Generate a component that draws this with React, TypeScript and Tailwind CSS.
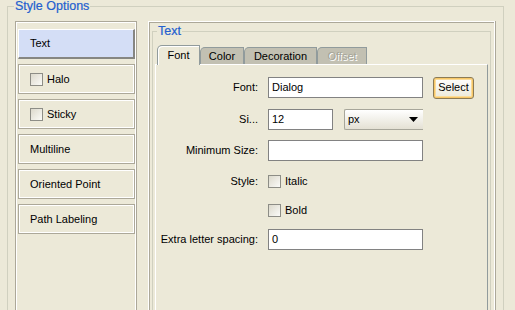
import React from "react";

const items = [
  { label: "Text", selected: true },
  { label: "Halo", check: true },
  { label: "Sticky", check: true },
  { label: "Multiline" },
  { label: "Oriented Point" },
  { label: "Path Labeling" },
];

const tabs = [
  { label: "Font", w: "w-[43px]", selected: true },
  { label: "Color", w: "w-[44px]" },
  { label: "Decoration", w: "w-[73px]" },
  { label: "Offset", w: "w-[50px]", disabled: true },
];

function CheckBox() {
  return (
    <span className="inline-block w-[13px] h-[13px] shrink-0 border border-[#8d8d86] bg-gradient-to-br from-[#dcd9cc] to-[#fbfbf8]" />
  );
}

function Field({ w, value }: { w: string; value?: string }) {
  return (
    <div className={`${w} h-[21px] border border-[#828282] bg-white pl-[3px] flex items-center`}>
      {value}
    </div>
  );
}

function Row({ label, mt, children }: { label: string; mt: string; children: React.ReactNode }) {
  return (
    <div className={`flex items-center h-[23px] ${mt}`}>
      <div className="w-[102px] text-right whitespace-nowrap overflow-hidden">{label}</div>
      <div className="ml-[10px] flex items-center">{children}</div>
    </div>
  );
}

export default function App() {
  return (
    <div className="w-[515px] h-[310px] overflow-hidden bg-[#ece9d8] font-['Liberation_Sans',Arial,sans-serif] text-[11px] text-black">
      <fieldset className="ml-[7px] w-[497px] h-[330px] border border-[#d0d0bf]">
        <legend className="ml-[6px] px-[1px] text-[12.5px] leading-[13px] text-[#2360cf] [-webkit-text-stroke:0.2px_#2360cf]">Style Options</legend>
        <div className="flex mt-[8px] ml-[7px]">
          {/* list of style options */}
          <div className="w-[122px] h-[300px] border border-[#aca899] shadow-[inset_1px_1px_0_#fff,inset_-1px_-1px_0_#fff] pt-[7px] pl-[2px] flex flex-col gap-[5px]">
            {items.map((it) =>
              it.selected ? (
                <div
                  key={it.label}
                  className="w-[117px] h-[30px] bg-[#d4def6] border-t border-l border-white border-r-2 border-b-2 border-r-[#868682] border-b-[#868682] pl-[11px] flex items-center"
                >
                  {it.label}
                </div>
              ) : (
                <div
                  key={it.label}
                  className="w-[117px] h-[30px] border border-[#aca899] shadow-[inset_1px_1px_0_#fff,inset_-1px_-1px_0_#fff] pl-[11px] flex items-center gap-[4px]"
                >
                  {it.check && <CheckBox />}
                  {it.label}
                </div>
              )
            )}
          </div>

          {/* editor panel */}
          <div className="ml-[11px] w-[347px] h-[300px] border border-white shadow-[inset_1px_1px_0_#aca899,1px_0_0_#aca899]">
            <fieldset className="ml-[3px] mt-[3px] w-[339px] h-[300px] border border-[#d0d0bf]">
              <legend className="ml-[4px] px-[1px] text-[12.5px] leading-[13px] text-[#2360cf] [-webkit-text-stroke:0.2px_#2360cf]">Text</legend>
              <div className="mt-[7px] ml-[2px] w-[333px]">
                <div className="flex items-end h-[19px] pl-[2px]">
                  {tabs.map((t) =>
                    t.selected ? (
                      <div
                        key={t.label}
                        className={`${t.w} h-[20px] -mb-[1px] relative z-10 bg-[#ece9d8] border-t border-l border-r border-[#919b9c] rounded-tl-[5px] shadow-[inset_1px_1px_0_#fff] flex items-center justify-center`}
                      >
                        {t.label}
                      </div>
                    ) : (
                      <div
                        key={t.label}
                        className={`${t.w} h-[17px] bg-[#c2c0b2] border-t border-l border-r border-[#919b9c] rounded-tl-[5px] flex items-center justify-center ${
                          t.disabled ? "text-[#a6a598] [text-shadow:1px_1px_0_#fff]" : ""
                        }`}
                      >
                        {t.label}
                      </div>
                    )
                  )}
                </div>
                <div className="h-[260px] border-t border-l border-white border-r border-r-[#919b9c]">
                  <Row label="Font:" mt="mt-[11px]">
                    <Field w="w-[155px]" value="Dialog" />
                    <div className="ml-[10px] w-[41px] h-[22px] rounded-[3px] border border-[#8c7b55] shadow-[inset_0_0_0_1px_#f7c767,inset_0_0_0_2px_#fbdc9a] bg-gradient-to-b from-[#ffffff] to-[#ece9d8] flex items-center justify-center">
                      Select
                    </div>
                  </Row>
                  <Row label="Si..." mt="mt-[9px]">
                    <Field w="w-[65px]" value="12" />
                    <div className="ml-[11px] w-[79px] h-[21px] border border-[#a7a69a] border-r-0 rounded-l-[2px] bg-gradient-to-b from-[#ffffff] to-[#e4e1d4] pl-[3px] pr-[5px] flex items-center justify-between">
                      <span>px</span>
                      <svg width="9" height="5" viewBox="0 0 9 5">
                        <path d="M0 0H9L4.5 5Z" fill="#000" />
                      </svg>
                    </div>
                  </Row>
                  <Row label="Minimum Size:" mt="mt-[8px]">
                    <Field w="w-[155px]" />
                  </Row>
                  <Row label="Style:" mt="mt-[8px]">
                    <CheckBox />
                    <span className="ml-[4px]">Italic</span>
                  </Row>
                  <Row label="" mt="mt-[6px]">
                    <CheckBox />
                    <span className="ml-[4px]">Bold</span>
                  </Row>
                  <Row label="Extra letter spacing:" mt="mt-[6px]">
                    <Field w="w-[155px]" value="0" />
                  </Row>
                </div>
              </div>
            </fieldset>
          </div>
        </div>
      </fieldset>
    </div>
  );
}
